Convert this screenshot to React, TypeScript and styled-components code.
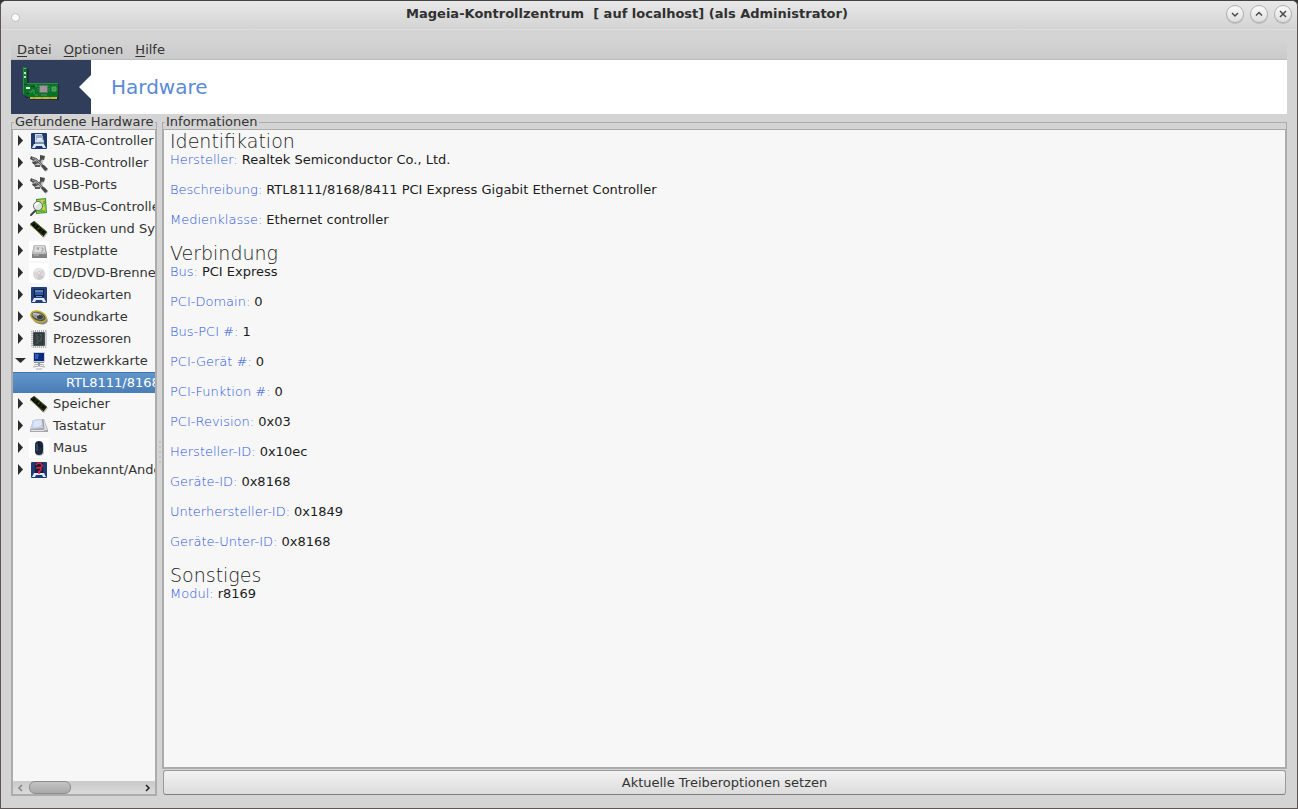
import React, { useState } from "react";
import styled, { createGlobalStyle } from "styled-components";

const GlobalStyle = createGlobalStyle`
  *, *::before, *::after { box-sizing: border-box; }
  body {
    margin: 0;
    background: #333;
    color: #333;
    font-family: "DejaVu Sans", sans-serif;
    font-size: 13px;
    line-height: 15px;
  }
  button { font: inherit; color: inherit; margin: 0; padding: 0; border: 0; background: none; }
`;

const Window = styled.div`
  display: flex;
  flex-direction: column;
  height: 100vh;
  min-height: 560px;
  background: #d4d4d4;
  border: 1px solid #5c5654;
  border-top-color: #444;
  border-radius: 6px 6px 0 0;
  overflow: hidden;
`;

const TitleBar = styled.header`
  display: flex;
  align-items: center;
  flex: none;
  height: 29px;
  padding: 0 5px 2px 10px;
  background: linear-gradient(#e8e8e8, #d3d3d3);
  border-bottom: 1px solid #dedede;
`;

const MenuDot = styled.button`
  width: 9px;
  height: 9px;
  margin: 6px 8px 0 0;
  border: 1px solid #bebebe;
  border-radius: 50%;
  background: #fafafa;
`;

const Title = styled.h1`
  flex: 1;
  margin: 0;
  font-size: 13px;
  line-height: 16px;
  font-weight: bold;
  text-align: center;
  white-space: pre;
  color: #303030;
`;

const WindowControls = styled.div`
  display: flex;
  gap: 6px;
`;

const RoundButton = styled.button`
  display: grid;
  place-items: center;
  width: 18px;
  height: 18px;
  border: 1px solid #b0b0b0;
  border-radius: 50%;
  background: linear-gradient(#fafafa, #dedede);
  box-shadow: 0 1px 0 #bbb;
`;

const Content = styled.div`
  display: flex;
  flex-direction: column;
  flex: 1;
  min-height: 0;
  padding: 10px 10px 12px;
`;

const MenuBar = styled.nav`
  display: flex;
  align-items: center;
  flex: none;
  gap: 12px;
  height: 20px;
  padding: 0 6px 1px;
  background: linear-gradient(#d4d4d4, #cacaca);
  border-bottom: 1px solid #bdbdbd;
`;

const Banner = styled.div`
  display: flex;
  align-items: center;
  flex: none;
  height: 54px;
  background: #fff;
`;

const BannerImage = styled.div`
  width: 80px;
  height: 54px;
  flex: none;
`;

const BannerTitle = styled.h2`
  margin: 0 0 0 20px;
  font-size: 20px;
  line-height: 24px;
  font-weight: normal;
  color: #5b8ad8;
`;

const Panes = styled.main`
  display: grid;
  grid-template-columns: 146px 5px minmax(0, 1fr);
  flex: 1;
  min-height: 0;
  padding-top: 1px;
`;

const Group = styled.fieldset`
  display: flex;
  flex-direction: column;
  flex: 1;
  min-width: 0;
  min-height: 0;
  margin: 0;
  padding: 0;
  border: 1px solid #acacac;
`;

const GroupTitle = styled.legend`
  margin-left: 2px;
  padding: 0 1px;
  line-height: 14px;
  white-space: nowrap;
`;

const Sunken = styled.div`
  display: flex;
  flex-direction: column;
  flex: 1;
  min-height: 0;
  height: 100%;
  background: #f7f7f7;
  border: 1px solid #acacac;
`;

const Tree = styled.ul`
  flex: 1;
  min-height: 0;
  margin: 0;
  padding: 0;
  list-style: none;
  overflow: hidden;
`;

const TreeRow = styled.button`
  display: flex;
  align-items: center;
  width: 100%;
  height: 22px;
  padding-bottom: 1px;
  text-align: left;
  white-space: nowrap;
  overflow: hidden;
`;

const ChildRow = styled(TreeRow)`
  height: 21px;
  padding-left: 53px;
  color: #fff;
  background: linear-gradient(#6195ca, #4a7db7);
  border-top: 1px solid #4274aa;
`;

const Expander = styled.svg`
  flex: none;
  width: 16px;
  height: 16px;
`;

const DeviceIcon = styled.svg`
  flex: none;
  width: 20px;
  height: 20px;
  margin-right: 4px;
`;

const ScrollBar = styled.div`
  display: flex;
  align-items: center;
  flex: none;
  height: 13px;
  background: linear-gradient(#c9c9c9, #dadada);
`;

const ScrollArrow = styled.button`
  display: grid;
  place-items: center;
  flex: none;
  width: 16px;
  height: 13px;
`;

const ScrollTrack = styled.div`
  flex: 1;
`;

const ScrollThumb = styled.div`
  width: 42px;
  height: 13px;
  border: 1px solid #8c8c8c;
  border-radius: 6px;
  background: linear-gradient(#c4c4c4, #a9a9a9);
`;

const Splitter = styled.div`
  display: flex;
  flex-direction: column;
  align-items: center;
  justify-content: center;
  gap: 3px;
  padding-bottom: 8px;
`;

const Grip = styled.i`
  width: 2px;
  height: 2px;
  background: #bcbcbc;
  border-radius: 1px;
`;

const RightPane = styled.section`
  display: flex;
  flex-direction: column;
  min-width: 0;
  min-height: 0;
`;

const Details = styled.div`
  padding: 0 6px;
  overflow: auto;
  color: #1c1c1c;
`;

const SectionTitle = styled.h3`
  margin: 0;
  font-size: 19px;
  line-height: 22px;
  font-weight: 200;
`;

const Facts = styled.dl`
  margin: 0;
`;

const Fact = styled.div`
  display: flex;
  gap: 4px;
  height: 30px;
`;

const FactName = styled.dt`
  font-weight: 200;
  color: #2b56e0;
`;

const FactValue = styled.dd`
  margin: 0;
`;

const ActionButton = styled.button`
  flex: none;
  height: 25px;
  margin: 1px;
  padding-bottom: 1px;
  border: 1px solid #9a9a9a;
  border-bottom-color: #7d7d7d;
  border-radius: 3px;
  background: linear-gradient(#f3f3f3, #dcdcdc);
`;

const MenuItem = styled.button`
  &::first-letter { text-decoration: underline; text-underline-offset: 2px; }
`;

function NetworkCard() {
  return (
    <svg width="80" height="54" viewBox="0 0 80 54" aria-hidden="true">
      <path d="M0 0H80V15L68 27L80 39V54H0Z" fill="#303e5b" />
      <path d="M14 9h4v15H48v16H19v-2h-5z" fill="#222e40" />
      <path d="M12 7h4v16h31v14H17l-5-3z" fill="#087326" />
      <path d="M12 7h1v27h-1zM16 23h31v1H16z" fill="#2d8a4d" />
      <path d="M13 12h2v2h-2zM13 16h2v2h-2z" fill="#bde3cf" />
      <path d="M13 8h2v1h-2zM14 14h1v1h-1z" fill="#68ad78" />
      <path d="M15 27h4v2h-4z" fill="#f0f5f1" />
      <path d="M20 26h4v1h-4zM13 24h3v1h-3zM15 33h3v1h-3z" fill="#064716" />
      <path d="M28 25h9v8h-9z" fill="#666d6d" />
      <path d="M29 26h7v6h-7z" fill="#9b9799" />
      <path d="M27 26v6M38 26v6" stroke="#4c8f5c" strokeDasharray="1 1" />
      <path d="M41 27h4v4h-4z" fill="#3e9551" stroke="#5fa56c" />
      <path d="M18 32h3v-2h2v4M24 35h3M30 35h6M25 24v3" fill="none" stroke="#479b5d" />
      <path d="M19 37h27v2H19z" fill="#c9b43c" />
      <path d="M23 37v2M31 37v2M39 37v2" stroke="#9a8b2c" />
    </svg>
  );
}

type IconName = "sata" | "usb" | "bus" | "chip" | "disk" | "cd" | "video" | "sound" | "cpu" | "net" | "keyboard" | "mouse" | "unknown";

const art: Record<IconName, React.ReactNode> = {
  sata: (
    <>
      <rect x="2" y="2" width="16" height="16" rx="1" fill="#203973" />
      <path d="M6 3h7l2 8H6z" fill="#d5deea" />
      <path d="M7 4h6l1 5H7z" fill="#9cacca" />
      <path d="M8 7h5v2H8z" fill="#e8eef6" />
      <path d="M6 11h9v2H6z" fill="#7f90ad" />
      <path d="M5 13h10l2 4h-3l-1-2H7l-1 2H3z" fill="#dfeaff" />
    </>
  ),
  video: (
    <>
      <rect x="2" y="2" width="16" height="16" rx="1" fill="#253e7c" />
      <path d="M5 4h10v8H5z" fill="#13213e" />
      <path d="M6 5h8v5H6z" fill="#2f5aa8" />
      <path d="M6 5h8v2H6z" fill="#6284bd" />
      <path d="M7 11h6v1H7z" fill="#7d8ca8" />
      <path d="M5 13h10l2 4h-3l-1-2H7l-1 2H3z" fill="#dceaff" />
    </>
  ),
  unknown: (
    <>
      <rect x="2" y="2" width="16" height="16" rx="1" fill="#203b73" />
      <path d="M5 13h10l2 4h-3l-1-2H7l-1 2H3z" fill="#dceaff" />
      <path d="M6 3h8v10H6z" fill="#171f40" />
      <path d="M7 5q1-2 3-2t3 2-3 3M7 8q5-1 5 1t-3 3M9 13h2" fill="none" stroke="#dc2238" strokeWidth="1.600" />
    </>
  ),
  usb: (
    <>
      <path d="M3 7l5 1 5 5 5 5M5 12l7-2 2-5" fill="none" stroke="#c4c4c4" strokeWidth="3" />
      <path d="M2 5l5 1 5 5 4 4M5 11l6-3 2-4M6 13h5" fill="none" stroke="#5c5c5a" strokeWidth="2" />
      <path d="M2 3l4 2-1 3-4-2zM11 2l5 1-1 4-4-1zM3 9l4-1v3H4zM12 13l3-1 4 4-3 2z" fill="#484a49" />
      <path d="M3 5l5 2 5 5" fill="none" stroke="#a2a2a0" />
    </>
  ),
  bus: (
    <>
      <path d="M7 2l10-1 1 15-11 1z" fill="#3b9b26" />
      <path d="M8 3l8-1 1 13-9 1z" fill="#8ed052" />
      <path d="M12 3h3v3h-3zM14 10h2v4h-2z" fill="#eec446" />
      <path d="M15 4v3M9 14h7" stroke="#4a8a2b" />
      <path d="M7 13l-5 5" stroke="#3c4541" strokeWidth="2" strokeLinecap="round" />
      <circle cx="9" cy="9" r="4.500" fill="#dfe9e4" fillOpacity=".95" stroke="#66736c" />
      <path d="M6 9q1-3 4-3" fill="none" stroke="#fff" strokeWidth="2" />
    </>
  ),
  chip: (
    <>
      <path d="M2 6l4-3 13 11-4 5z" fill="#9da08f" opacity=".6" />
      <path d="M1 5l4-3 13 11-4 5z" fill="#171d10" />
      <path d="M3 5l2-1 11 9-2 2z" fill="#374e1a" />
      <path d="M4 5l2 2M7 7l2 2M10 10l2 2M13 12l2 2" stroke="#080c06" strokeWidth="3" />
      <path d="M1 6l13 11" stroke="#8d9b2d" strokeDasharray="2 1" />
      <path d="M5 2l13 11" stroke="#5f7631" />
    </>
  ),
  disk: (
    <>
      <path d="M0 0h20v20H0z" fill="#fff" />
      <path d="M5 4h11l2 9v4H3v-4z" fill="#7d7d7d" />
      <path d="M5 4h11l1 9H3z" fill="#bdbdbd" />
      <path d="M6 5h9l1 6H5z" fill="#dedede" />
      <path d="M7 7h2v2M10 6l-1 3M12 7h2v3h-2" fill="none" stroke="#a0a0a0" />
      <path d="M3 13h15v3H3z" fill="#858585" />
      <path d="M5 14h5" stroke="#bbb" />
    </>
  ),
  cd: (
    <>
      <path d="M0 0h20v20H0z" fill="#fff" />
      <circle cx="10" cy="11" r="6" fill="#d8d8d8" />
      <path d="M10 11L5 8q3-4 8-2z" fill="#e8e8e8" />
      <path d="M10 11l5 3q-3 4-7 2z" fill="#cbc8c7" />
      <circle cx="10" cy="10" r="1.500" fill="#f6eeee" stroke="#d0c8c8" />
    </>
  ),
  sound: (
    <>
      <ellipse cx="11" cy="12" rx="8" ry="5" transform="rotate(20 11 12)" fill="#898a81" />
      <ellipse cx="9.500" cy="9.500" rx="8" ry="5" transform="rotate(20 9.500 9.500)" fill="#555752" stroke="#c2b02a" strokeWidth="1.500" />
      <ellipse cx="9" cy="9" rx="6" ry="3" transform="rotate(20 9 9)" fill="#9b9b94" />
      <ellipse cx="11" cy="10" rx="3" ry="2" fill="#3c3f3f" />
      <path d="M4 7q3-1 6 1" stroke="#d5d5d3" fill="none" />
    </>
  ),
  cpu: (
    <>
      <rect x="3" y="2" width="14" height="16" rx="1" fill="none" stroke="#a4abad" strokeWidth="2" strokeDasharray="1 1" />
      <rect x="4" y="3" width="12" height="14" rx="1" fill="#4a5253" />
      <path d="M5 4h10v12H5z" fill="#343c3d" />
      <path d="M7 6h2M11 6h2M7 8h3M12 8h1M7 10h2M11 10h2M8 12h4M7 14h2" stroke="#596464" />
    </>
  ),
  net: (
    <>
      <path d="M4 1h12v10H4z" fill="#ccd1d6" />
      <path d="M5 2h10v8H5z" fill="#09297b" />
      <path d="M6 3h4l-1 5H6z" fill="#315ab8" />
      <path d="M5 11h10v1H5zM9 12h2v3H9z" fill="#8c9196" />
      <path d="M5 14q5-2 10 0M4 16q6-2 12 0M7 18h6" fill="none" stroke="#aaaeb1" />
    </>
  ),
  keyboard: (
    <>
      <path d="M4 4l11-1 4 11v2H1v-2z" fill="#a7a8ad" />
      <path d="M4 4l9-1 1 9-13 1z" fill="#c5cfe8" />
      <path d="M5 5l7-1 1 4q-3 4-9 3z" fill="#dce4f6" />
      <path d="M14 4h1l3 10h-3zM2 14h13v1H2z" fill="#e6e6e6" />
      <path d="M14 4l1 9" stroke="#999" />
    </>
  ),
  mouse: (
    <>
      <path d="M0 0h20v20H0z" fill="#fff" />
      <rect x="6" y="4" width="9" height="14" rx="4" fill="#c8ccd2" />
      <rect x="6" y="3" width="8" height="14" rx="4" fill="#1f2c40" />
      <path d="M7 8h6M10 4v4" stroke="#111722" />
      <path d="M8 6v7" stroke="#34486a" strokeWidth="2" />
    </>
  ),
};

type Device = { label: string; icon: IconName; child?: string };

const devices: Device[] = [
  { label: "SATA-Controller", icon: "sata" },
  { label: "USB-Controller", icon: "usb" },
  { label: "USB-Ports", icon: "usb" },
  { label: "SMBus-Controller", icon: "bus" },
  { label: "Brücken und Systemcontroller", icon: "chip" },
  { label: "Festplatte", icon: "disk" },
  { label: "CD/DVD-Brenner", icon: "cd" },
  { label: "Videokarten", icon: "video" },
  { label: "Soundkarte", icon: "sound" },
  { label: "Prozessoren", icon: "cpu" },
  { label: "Netzwerkkarte", icon: "net", child: "RTL8111/8168/8411" },
  { label: "Speicher", icon: "chip" },
  { label: "Tastatur", icon: "keyboard" },
  { label: "Maus", icon: "mouse" },
  { label: "Unbekannt/Andere", icon: "unknown" },
];

const sections: { title: string; facts: [string, string][] }[] = [
  {
    title: "Identifikation",
    facts: [
      ["Hersteller", "Realtek Semiconductor Co., Ltd."],
      ["Beschreibung", "RTL8111/8168/8411 PCI Express Gigabit Ethernet Controller"],
      ["Medienklasse", "Ethernet controller"],
    ],
  },
  {
    title: "Verbindung",
    facts: [
      ["Bus", "PCI Express"],
      ["PCI-Domain", "0"],
      ["Bus-PCI #", "1"],
      ["PCI-Gerät #", "0"],
      ["PCI-Funktion #", "0"],
      ["PCI-Revision", "0x03"],
      ["Hersteller-ID", "0x10ec"],
      ["Geräte-ID", "0x8168"],
      ["Unterhersteller-ID", "0x1849"],
      ["Geräte-Unter-ID", "0x8168"],
    ],
  },
  { title: "Sonstiges", facts: [["Modul", "r8169"]] },
];

function Stroke({ d, color = "#4a4a4a" }: { d: string; color?: string }) {
  return (
    <svg width="10" height="10" viewBox="0 0 10 10" aria-hidden="true">
      <path d={d} fill="none" stroke={color} strokeWidth="1.5" />
    </svg>
  );
}

function DeviceNode({ device }: { device: Device }) {
  const [open, setOpen] = useState(Boolean(device.child));
  return (
    <li>
      <TreeRow aria-expanded={open} onClick={() => setOpen(!open)}>
        <Expander viewBox="0 0 16 16" aria-hidden="true">
          <path d={open ? "M2 5h11L7.500 10z" : "M5 2v11l5-5.500z"} fill="#2c2c2c" />
        </Expander>
        <DeviceIcon viewBox="0 0 20 20" aria-hidden="true">{art[device.icon]}</DeviceIcon>
        {device.label}
      </TreeRow>
      {open && device.child && <ChildRow>{device.child}</ChildRow>}
    </li>
  );
}

export default function App() {
  return (
    <>
      <GlobalStyle />
      <Window>
        <TitleBar>
          <MenuDot aria-label="Fenstermenü" />
          <Title>{"Mageia-Kontrollzentrum  [ auf localhost] (als Administrator)"}</Title>
          <WindowControls>
            <RoundButton aria-label="Minimieren"><Stroke d="M2 4l3 3 3-3" /></RoundButton>
            <RoundButton aria-label="Maximieren"><Stroke d="M2 6.500l3-3 3 3" /></RoundButton>
            <RoundButton aria-label="Schließen"><Stroke d="M2 2l6 6M8 2l-6 6" /></RoundButton>
          </WindowControls>
        </TitleBar>
        <Content>
          <MenuBar>
            <MenuItem>Datei</MenuItem>
            <MenuItem>Optionen</MenuItem>
            <MenuItem>Hilfe</MenuItem>
          </MenuBar>
          <Banner>
            <BannerImage><NetworkCard /></BannerImage>
            <BannerTitle>Hardware</BannerTitle>
          </Banner>
          <Panes>
            <Group>
              <GroupTitle>Gefundene Hardware</GroupTitle>
              <Sunken>
                <Tree>
                  {devices.map((d) => <DeviceNode key={d.label} device={d} />)}
                </Tree>
                <ScrollBar>
                  <ScrollArrow aria-label="Nach links"><Stroke d="M6 2L3 5l3 3" color="#858585" /></ScrollArrow>
                  <ScrollTrack><ScrollThumb /></ScrollTrack>
                  <ScrollArrow aria-label="Nach rechts"><Stroke d="M4 2l3 3-3 3" color="#222" /></ScrollArrow>
                </ScrollBar>
              </Sunken>
            </Group>
            <Splitter>
              <Grip /><Grip /><Grip /><Grip /><Grip />
            </Splitter>
            <RightPane>
              <Group>
                <GroupTitle>Informationen</GroupTitle>
                <Sunken>
                  <Details>
                    {sections.map((s) => (
                      <section key={s.title}>
                        <SectionTitle>{s.title}</SectionTitle>
                        <Facts>
                          {s.facts.map(([name, value]) => (
                            <Fact key={name}>
                              <FactName>{name}:</FactName>
                              <FactValue>{value}</FactValue>
                            </Fact>
                          ))}
                        </Facts>
                      </section>
                    ))}
                  </Details>
                </Sunken>
              </Group>
              <ActionButton>Aktuelle Treiberoptionen setzen</ActionButton>
            </RightPane>
          </Panes>
        </Content>
      </Window>
    </>
  );
}
